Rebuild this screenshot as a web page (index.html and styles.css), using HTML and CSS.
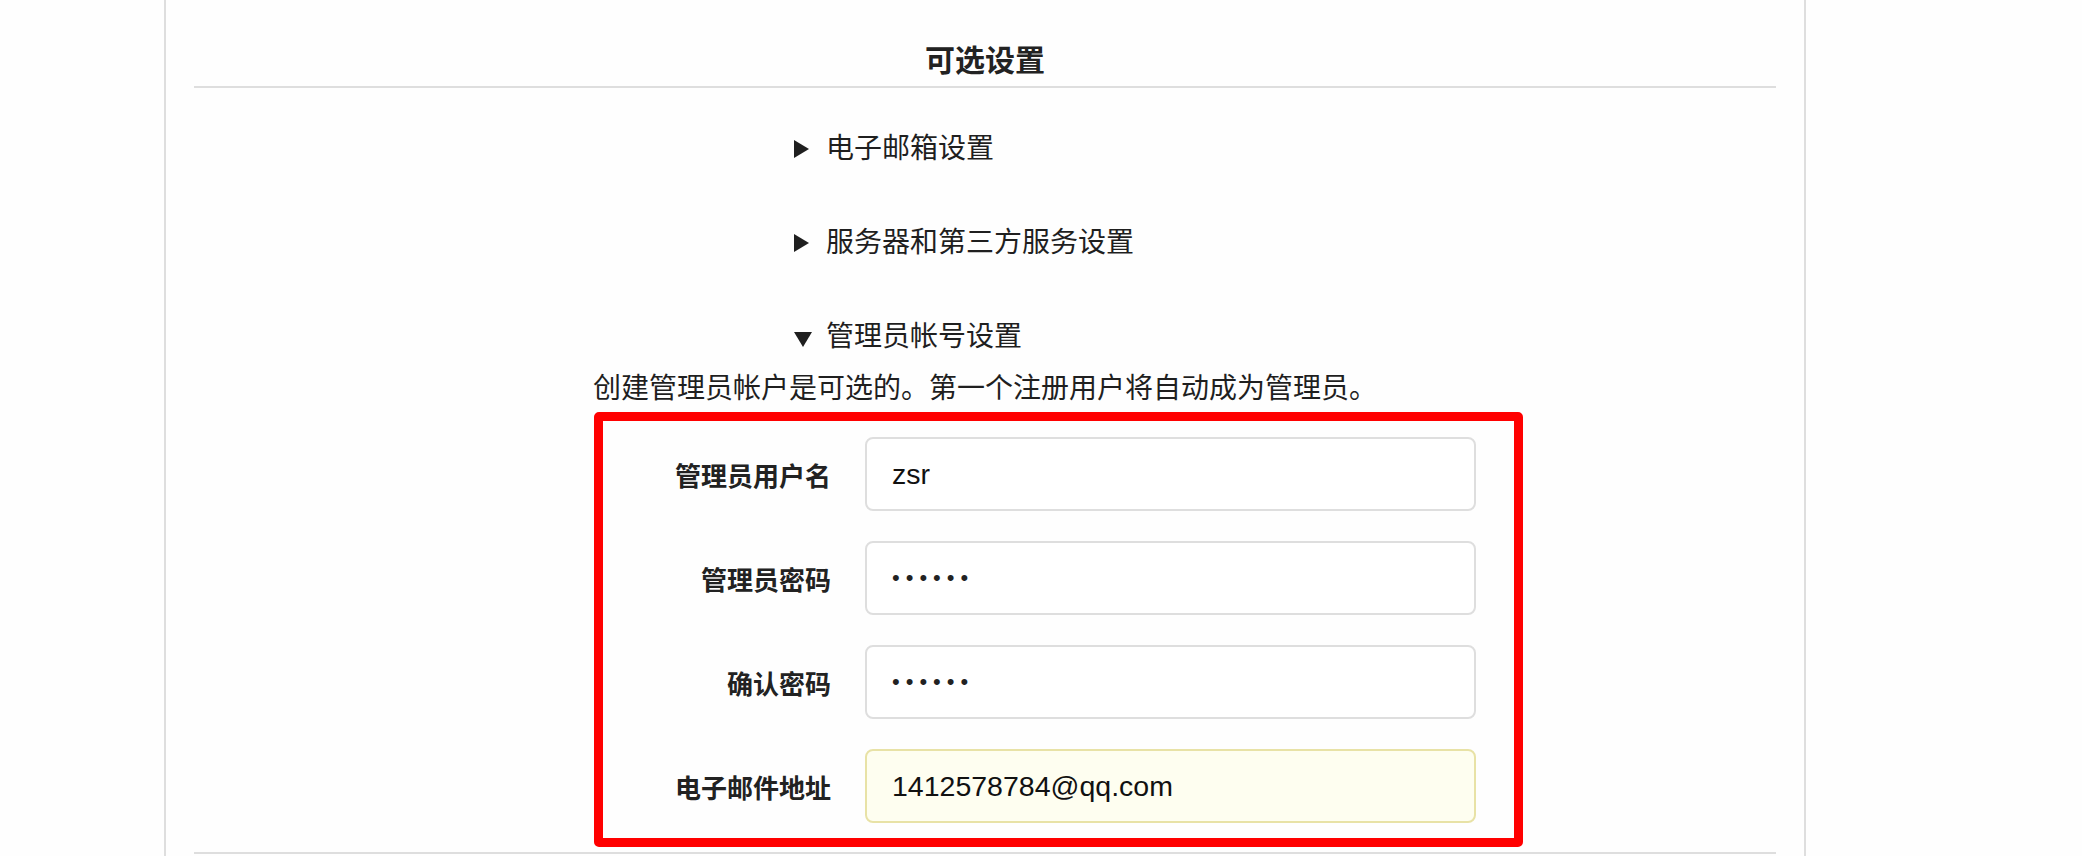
FILE: index.html
```
<!DOCTYPE html>
<html lang="zh-CN">
<head>
    <meta charset="UTF-8">
    <meta name="viewport" content="width=device-width, initial-scale=1.0">
    <title>安装页面 - 可选设置</title>
    <link rel="stylesheet" href="styles.css">
</head>
<body>

    <div class="page">
        <h3 class="section-title">可选设置</h3>

        <div class="optional-list">
            <details class="optional">
                <summary>电子邮箱设置</summary>
            </details>

            <details class="optional">
                <summary>服务器和第三方服务设置</summary>
            </details>

            <details class="optional" open>
                <summary>管理员帐号设置</summary>
                <p class="help">创建管理员帐户是可选的。第一个注册用户将自动成为管理员。</p>

                <div class="admin-fields">
                    <label for="admin-name">管理员用户名</label>
                    <input type="text" id="admin-name" value="zsr">

                    <label for="admin-passwd">管理员密码</label>
                    <input type="password" id="admin-passwd" value="123456">

                    <label for="admin-confirm">确认密码</label>
                    <input type="password" id="admin-confirm" value="123456">

                    <label for="admin-email">电子邮件地址</label>
                    <input type="email" id="admin-email" class="autofilled" value="1412578784@qq.com">
                </div>
            </details>
        </div>

        <div class="divider"></div>
    </div>

</body>
</html>
```

FILE: styles.css
```
html, body {
    margin: 0;
    height: 856px;
    overflow: hidden;
    background: #fefefe;
}

body {
    font-family: "Liberation Sans", "Noto Sans CJK SC", sans-serif;
    color: #1f1f1f;
}

.page {
    box-sizing: border-box;
    margin-left: 164px;
    width: 1642px;
    height: 856px;
    padding: 39px 28px 0;
    border-left: 2px solid #dedede;
    border-right: 2px solid #dedede;
}

.section-title {
    margin: 0;
    padding-bottom: 3px;
    font-size: 30px;
    line-height: 44px;
    font-weight: bold;
    text-align: center;
    color: #222;
    border-bottom: 2px solid #dedede;
}

.optional-list {
    margin-top: 14px;
}

.optional summary {
    list-style: none;
    display: flex;
    align-items: center;
    margin-left: 600px;
    padding: 27px 0;
    font-size: 28px;
    line-height: 40px;
    cursor: pointer;
}

.optional summary::-webkit-details-marker {
    display: none;
}

.optional summary::before {
    content: "";
    width: 0;
    height: 0;
    margin-right: 17px;
    border-left: 15px solid #1f1f1f;
    border-top: 9px solid transparent;
    border-bottom: 9px solid transparent;
}

.optional[open] summary {
    padding-bottom: 12px;
}

.optional[open] summary::before {
    margin-top: 4px;
    margin-right: 14px;
    border-top: 15px solid #1f1f1f;
    border-left: 9px solid transparent;
    border-right: 9px solid transparent;
    border-bottom: none;
}

.help {
    margin: 0 0 3px;
    font-size: 28px;
    line-height: 40px;
    text-align: center;
}

.admin-fields {
    display: grid;
    grid-template-columns: 228px 611px;
    column-gap: 34px;
    row-gap: 30px;
    align-items: center;
    width: fit-content;
    margin-left: 400px;
    padding: 16px 38px 15px 0;
    border: 9px solid #ff0000;
    border-radius: 5px;
}

.admin-fields label {
    text-align: right;
    font-size: 26px;
    font-weight: bold;
    color: #222;
}

.admin-fields input {
    box-sizing: border-box;
    height: 74px;
    padding: 0 25px;
    font-family: "Liberation Sans", "Noto Sans CJK SC", sans-serif;
    font-size: 28.5px;
    color: #111;
    background: #fff;
    border: 2px solid #dedede;
    border-radius: 8px;
    outline: none;
}

.admin-fields input[type="password"] {
    font-size: 22px;
    letter-spacing: 6px;
    color: #222;
}

.admin-fields input.autofilled {
    background: #fefef0;
    border-color: #e8e2a6;
}

.divider {
    margin-top: 5px;
    border-top: 2px solid #dedede;
}
```
